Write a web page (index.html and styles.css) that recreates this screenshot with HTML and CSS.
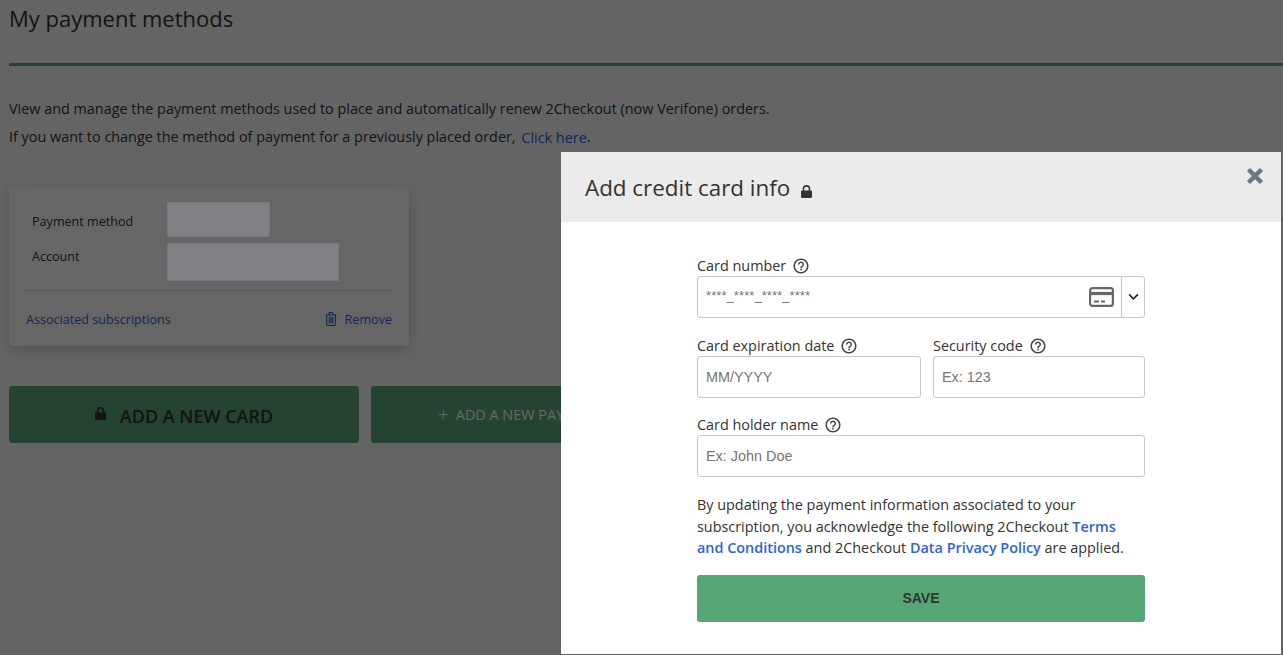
FILE: index.html
```html
<!DOCTYPE html>
<html lang="en">
<head>
    <meta charset="UTF-8">
    <meta name="viewport" content="width=device-width, initial-scale=1.0">
    <title>My payment methods</title>
    <link rel="stylesheet" href="styles.css">
</head>
<body>
    <svg class="icon-defs" width="0" height="0" aria-hidden="true">
        <symbol id="iconHelp" viewBox="0 0 24 24">
            <path d="M11 18h2v-2h-2v2zm1-16C6.48 2 2 6.48 2 12s4.48 10 10 10 10-4.48 10-10S17.52 2 12 2zm0 18c-4.41 0-8-3.59-8-8s3.59-8 8-8 8 3.59 8 8-3.59 8-8 8zm0-14c-2.21 0-4 1.79-4 4h2c0-1.1.9-2 2-2s2 .9 2 2c0 2-3 1.75-3 5h2c0-2.25 3-2.5 3-5 0-2.21-1.79-4-4-4z"/>
        </symbol>
        <symbol id="iconLock" viewBox="0 0 12 14">
            <path d="M3.6 6V4.1a2.4 2.4 0 0 1 4.8 0V6h1.7V4.1a4.1 4.1 0 0 0-8.2 0V6H1.2C.5 6 0 6.5 0 7.2v5.6C0 13.5.5 14 1.2 14h9.6c.7 0 1.2-.5 1.2-1.2V7.2C12 6.5 11.5 6 10.8 6z"/>
        </symbol>
    </svg>

    <!-- Page behind the dialog -->
    <main class="page">
        <h1 class="page-title">My payment methods</h1>
        <p class="intro">View and manage the payment methods used to place and automatically renew 2Checkout (now Verifone) orders.</p>
        <p class="intro">If you want to change the method of payment for a previously placed order, <a href="#" class="intro-link">Click here</a>.</p>

        <section class="method-card">
            <div class="method-rows">
                <span class="method-label">Payment method</span>
                <span class="redacted redacted-method"></span>
                <span class="method-label method-label-account">Account</span>
                <span class="redacted redacted-account"></span>
            </div>
            <div class="method-footer">
                <a href="#" class="method-link">Associated subscriptions</a>
                <a href="#" class="method-link remove-link">
                    <svg class="trash-icon" viewBox="0 0 12 14" fill="none" stroke="currentColor" stroke-width="1.1">
                        <path d="M.5 3h11M4 3V1.2c0-.4.3-.7.7-.7h2.6c.4 0 .7.3.7.7V3M1.7 3v9.3c0 .7.5 1.2 1.2 1.2h6.2c.7 0 1.2-.5 1.2-1.2V3M4.3 5v6.5M6 5v6.5M7.7 5v6.5"/>
                    </svg>
                    Remove
                </a>
            </div>
        </section>

        <div class="page-actions">
            <button type="button" class="page-btn page-btn-card">
                <svg class="lock-icon"><use href="#iconLock"/></svg>
                ADD A NEW CARD
            </button>
            <button type="button" class="page-btn page-btn-other">
                <span class="plus">+</span>
                ADD A NEW PAYMENT METHOD
            </button>
        </div>
    </main>

    <div class="overlay"></div>

    <!-- Add card dialog -->
    <div class="modal">
        <div class="modal-header">
            <h2 class="modal-title">Add credit card info
                <svg class="lock-icon title-lock"><use href="#iconLock"/></svg>
            </h2>
            <a href="#" class="modal-close" aria-label="Close">
                <svg viewBox="0 0 16 16" width="18" height="18"><path d="M.8 3.6 3.6.8 8 5.2 12.4.8l2.8 2.8L10.8 8l4.4 4.4-2.8 2.8L8 10.8l-4.400 4.400-2.800-2.800L5.200 8z"/></svg>
            </a>
        </div>
        <form class="modal-body">
            <div class="form-group">
                <label class="field-label" for="cardNumber">Card number
                    <svg class="help-icon"><use href="#iconHelp"/></svg>
                </label>
                <div class="card-input">
                    <input type="text" id="cardNumber" class="card-number" placeholder="****_****_****_****">
                    <svg class="card-icon" viewBox="0 0 25 20" fill="none" stroke="#666" stroke-width="2.2">
                        <rect x="1.1" y="1.1" width="22.8" height="17.8" rx="2.5"/>
                        <path d="M1 6.5h23" stroke-width="3.2"/>
                        <path d="M5 14.5h5M12 14.5h4" stroke-width="1.8"/>
                    </svg>
                    <span class="card-select">
                        <svg viewBox="0 0 12 8" width="11" height="8" fill="none" stroke="#222" stroke-width="1.8"><path d="M1.2 1.2 6 6l4.8-4.8"/></svg>
                    </span>
                </div>
            </div>
            <div class="form-row">
                <div class="form-group">
                    <label class="field-label" for="cardExpiry">Card expiration date
                        <svg class="help-icon"><use href="#iconHelp"/></svg>
                    </label>
                    <input type="text" id="cardExpiry" class="text-input" placeholder="MM/YYYY">
                </div>
                <div class="form-group">
                    <label class="field-label" for="cardCode">Security code
                        <svg class="help-icon"><use href="#iconHelp"/></svg>
                    </label>
                    <input type="text" id="cardCode" class="text-input" placeholder="Ex: 123">
                </div>
            </div>
            <div class="form-group">
                <label class="field-label" for="cardHolder">Card holder name
                    <svg class="help-icon"><use href="#iconHelp"/></svg>
                </label>
                <input type="text" id="cardHolder" class="text-input" placeholder="Ex: John Doe">
            </div>
            <p class="terms">By updating the payment information associated to your subscription, you acknowledge the following 2Checkout <a href="#">Terms and Conditions</a> and 2Checkout <a href="#">Data Privacy Policy</a> are applied.</p>
            <button type="submit" class="save-btn">SAVE</button>
        </form>
    </div>
</body>
</html>
```

FILE: styles.css
```css
html, body {
    height: 100%;
}
body {
    font-family: "Open Sans", Arial, sans-serif;
    margin: 0;
    padding: 0;
    background: #fbfbfb;
    color: #333;
    overflow: hidden;
}
.icon-defs {
    position: absolute;
}
.page {
    padding-left: 9px;
}
.page-title {
    margin: 0 0 29px;
    height: 66px;
    box-sizing: border-box;
    border-bottom: 3px solid #5aa878;
    font-size: 22px;
    font-weight: 400;
    line-height: 37px;
}
.intro {
    margin: 0;
    font-size: 14.4px;
    line-height: 28px;
}
.intro-link {
    color: #2b5fd9;
    text-decoration: none;
    margin-left: 2px;
    position: relative;
    top: 1px;
}
.method-card {
    width: 400px;
    height: 159px;
    box-sizing: border-box;
    margin-top: 36px;
    padding: 15px 17px 0 15px;
    background: #fff;
    border-radius: 3px;
    box-shadow: 0 4px 14px rgba(0, 0, 0, 0.2);
}
.method-rows {
    display: grid;
    grid-template-columns: 143px auto;
    row-gap: 6px;
    justify-items: start;
    padding-bottom: 9px;
    border-bottom: 1px solid #ddd;
}
.method-label {
    font-size: 12.6px;
    line-height: 18px;
    padding: 11px 0 0 8px;
}
.method-label-account {
    padding-top: 5px;
}
.redacted {
    position: relative;
    z-index: 20;
    background: #818286;
    border: 1px solid #77787b;
    box-sizing: border-box;
}
.redacted-method {
    width: 103px;
    height: 35px;
}
.redacted-account {
    width: 172px;
    height: 38px;
}
.method-footer {
    display: flex;
    justify-content: space-between;
    align-items: center;
    padding: 20px 0 0 2px;
}
.method-link {
    color: #2b5fd9;
    font-size: 12.6px;
    line-height: 18px;
    text-decoration: none;
}
.remove-link {
    display: flex;
    align-items: center;
    gap: 8px;
}
.trash-icon {
    width: 12px;
    height: 14px;
    margin-bottom: 2px;
}
.page-actions {
    display: flex;
    gap: 12px;
    margin-top: 40px;
}
.page-btn {
    width: 350px;
    height: 57px;
    border: none;
    border-radius: 3px;
    background: #5aa878;
    font-family: inherit;
    display: flex;
    align-items: center;
    justify-content: center;
}
.page-btn-card {
    color: #333;
    font-size: 18px;
    font-weight: 600;
    gap: 14px;
    padding-top: 3px;
}
.page-btn-card .lock-icon {
    margin-bottom: 5px;
}
.page-btn-other {
    color: #fff;
    font-size: 14.4px;
    gap: 7px;
    padding-left: 20px;
}
.plus {
    font-size: 20px;
    line-height: 20px;
    font-weight: 300;
}
.lock-icon {
    width: 11px;
    height: 13px;
    fill: currentColor;
}
.overlay {
    position: fixed;
    inset: 0;
    z-index: 10;
    background: rgba(0, 0, 0, 0.6);
}
.modal {
    position: fixed;
    left: 561px;
    top: 152px;
    z-index: 30;
    width: 720px;
    height: 502px;
    background: #fff;
}
.modal-header {
    height: 70px;
    box-sizing: border-box;
    padding: 1px 24px 0;
    background: #ebebeb;
    display: flex;
    align-items: center;
}
.modal-title {
    margin: 0;
    font-size: 22.4px;
    font-weight: 400;
    color: #333;
    line-height: 30px;
}
.title-lock {
    width: 11px;
    height: 13px;
    margin-left: 5px;
    vertical-align: -2px;
}
.modal-close {
    position: absolute;
    top: 15px;
    right: 17px;
    fill: #6c7785;
    line-height: 0;
}
.modal-body {
    width: 448px;
    margin: 0 auto;
    padding-top: 33px;
}
.form-group {
    margin-bottom: 17px;
}
.form-row {
    display: grid;
    grid-template-columns: 224px 212px;
    column-gap: 12px;
}
.form-row .form-group {
    margin-bottom: 16px;
}
.field-label {
    display: flex;
    align-items: center;
    gap: 6px;
    height: 21px;
    font-size: 14.4px;
    line-height: 20px;
    color: #333;
}
.help-icon {
    width: 18px;
    height: 18px;
    fill: #444;
}
.text-input {
    display: block;
    width: 100%;
    height: 42px;
    box-sizing: border-box;
    padding: 0 8px;
    border: 1px solid #c8c8c8;
    border-radius: 3px;
    font-family: "Liberation Sans", Arial, sans-serif;
    font-size: 14.4px;
}
.text-input::placeholder {
    color: #757575;
    opacity: 1;
}
.card-input {
    display: flex;
    align-items: center;
    height: 42px;
    box-sizing: border-box;
    border: 1px solid #c8c8c8;
    border-radius: 3px;
}
.card-number {
    flex: 1;
    min-width: 0;
    border: none;
    background: none;
    padding: 0 8px 4px;
    font-family: "Liberation Sans", Arial, sans-serif;
    font-size: 13.2px;
}
.card-number::placeholder {
    color: #757575;
    opacity: 1;
}
.card-icon {
    width: 25px;
    height: 20px;
    margin-right: 7px;
}
.card-select {
    width: 22px;
    height: 100%;
    border-left: 1px solid #c8c8c8;
    display: flex;
    align-items: center;
    justify-content: center;
}
.terms {
    margin: 0 0 16.5px;
    font-size: 14.4px;
    line-height: 21.5px;
    color: #333;
}
.terms a {
    color: #2b63e8;
    font-weight: 600;
    text-decoration: none;
}
.save-btn {
    display: block;
    width: 100%;
    height: 47px;
    padding: 0 0 2px;
    border: none;
    border-radius: 3px;
    background: #55a775;
    color: #333;
    font-family: "Liberation Sans", Arial, sans-serif;
    font-size: 14px;
    font-weight: 700;
}
```
